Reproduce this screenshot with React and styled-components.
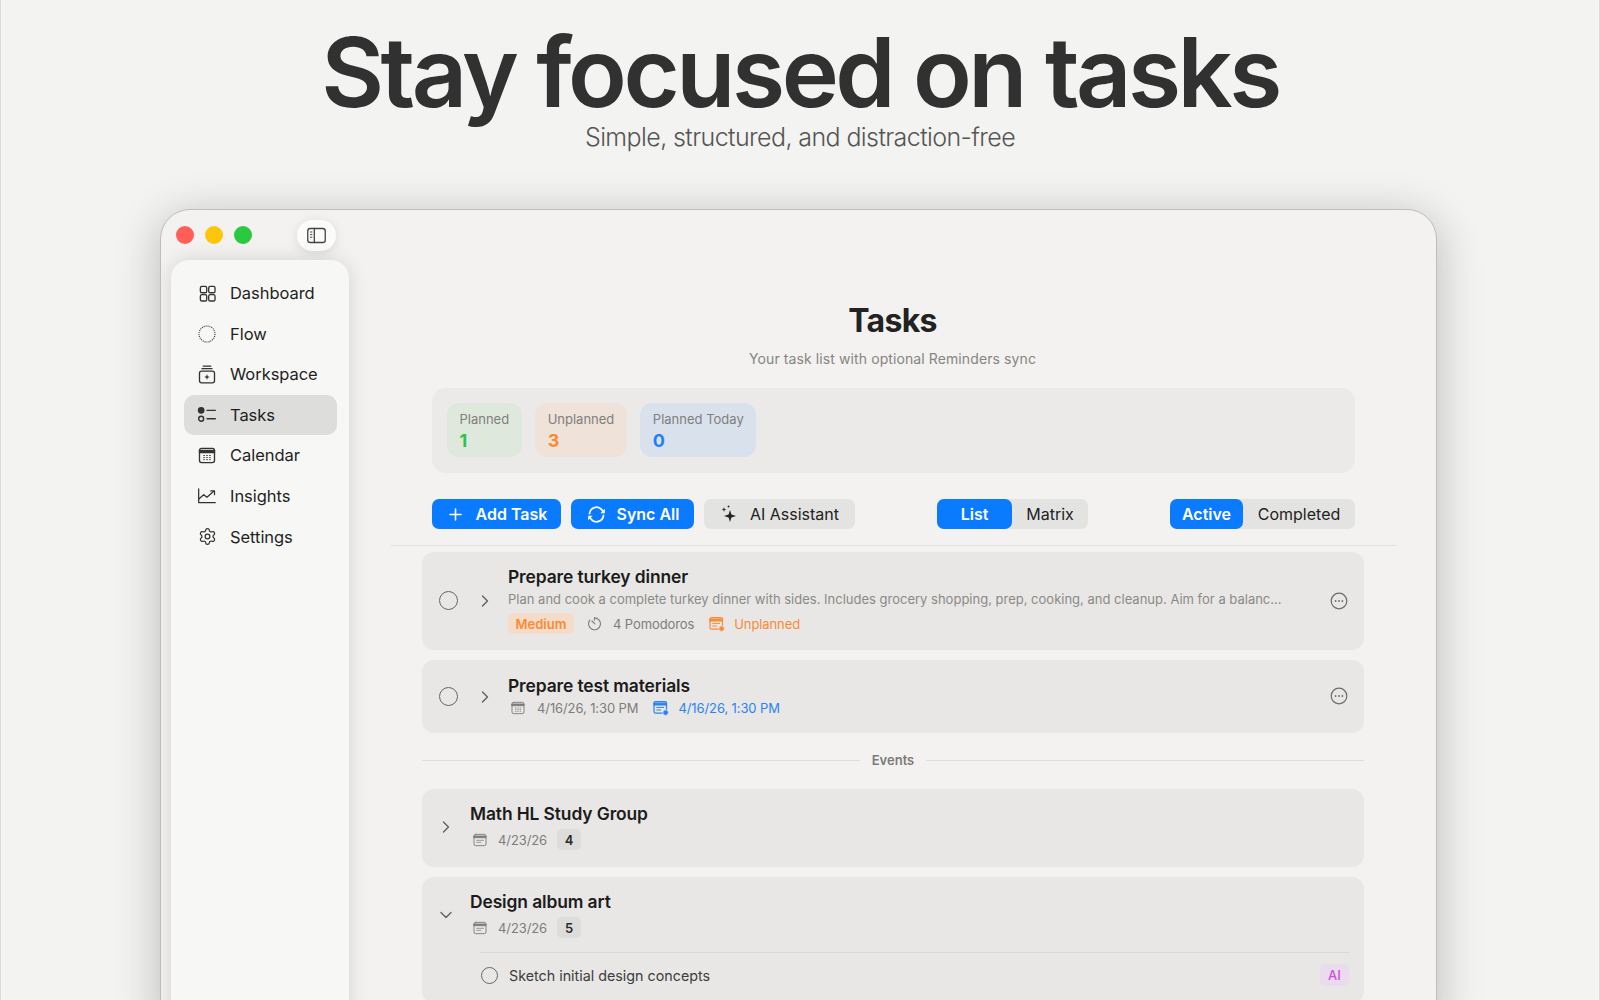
import styled, { createGlobalStyle } from 'styled-components'
import { Plus, Settings, ChevronRight, ChevronDown } from 'lucide-react'

const GlobalStyle = createGlobalStyle`
  html, body {
    margin: 0;
    padding: 0;
    background: #f3f3f1;
  }
  * {
    box-sizing: border-box;
  }
`

const Page = styled.div`
  height: 1000px;
  overflow: hidden;
  background: #f3f3f1;
  border-left: 1px solid #dcdcda;
  border-right: 1px solid #dcdcda;
  font-family: Inter, "Liberation Sans", sans-serif;
  color: #1d1d1d;
`

const Hero = styled.header`
  height: 209px;
  padding-top: 25px;
  text-align: center;
`

const HeroTitle = styled.h1`
  margin: 0;
  font-size: 96.7px;
  line-height: 94px;
  font-weight: 600;
  letter-spacing: -3.5px;
  color: #313131;
`

const HeroSub = styled.p`
  margin: 3px 0 0;
  font-size: 25px;
  line-height: 30px;
  font-weight: 300;
  letter-spacing: -0.6px;
  color: #555;
`

const Window = styled.div`
  display: flex;
  width: 1277px;
  height: 830px;
  margin-left: 159px;
  overflow: hidden;
  background: #f3f2f0;
  border: 1px solid #bdbdbb;
  border-radius: 30px;
  box-shadow: 0 8px 45px rgba(0, 0, 0, 0.24);
`

const LeftColumn = styled.aside`
  flex: 0 0 188px;
  display: flex;
  flex-direction: column;
`

const TitleBar = styled.div`
  height: 50px;
  display: flex;
  align-items: center;
  gap: 11px;
  padding-left: 15px;
`

const Light = styled.span`
  width: 18px;
  height: 18px;
  border-radius: 50%;
  background: ${({ $color }) => $color};
`

const SidebarToggle = styled.button`
  width: 39px;
  height: 31px;
  margin-left: 34px;
  display: flex;
  align-items: center;
  justify-content: center;
  padding: 0;
  border: 0;
  border-radius: 16px;
  color: #444;
  background: #fbfbfa;
  box-shadow: 0 2px 12px rgba(0, 0, 0, 0.1);
`

const Sidebar = styled.nav`
  flex: 1;
  margin-left: 10px;
  padding: 13px 12px 0 13px;
  display: flex;
  flex-direction: column;
  gap: 0.6px;
  background: #f7f7f5;
  border-radius: 18px 18px 0 0;
  box-shadow: 0 0 20px rgba(0, 0, 0, 0.13);
`

const NavItem = styled.div`
  height: 40px;
  display: flex;
  align-items: center;
  gap: 13px;
  padding-left: 13px;
  border-radius: 10px;
  font-size: 16.5px;
  letter-spacing: -0.05px;
  color: #1f1f1f;
  background: ${({ $active }) => ($active ? '#dddddb' : 'transparent')};
`

const NavIcon = styled.span`
  width: 20px;
  height: 20px;
  display: flex;
  align-items: center;
  justify-content: center;
  color: #333;
`

const Main = styled.main`
  flex: 1;
  min-width: 0;
  padding-top: 91px;
  display: flex;
  flex-direction: column;
`

const PageTitle = styled.h2`
  margin: 0;
  text-align: center;
  font-size: 32px;
  line-height: 40px;
  font-weight: 700;
  letter-spacing: -0.7px;
  color: #222;
`

const PageSub = styled.p`
  margin: 8px 0 0;
  text-align: center;
  font-size: 14px;
  line-height: 20px;
  color: #858583;
  letter-spacing: 0.1px;
`

const StatsPanel = styled.section`
  margin: 19px 81px 0 83px;
  padding: 15px;
  height: 85px;
  display: flex;
  gap: 13.5px;
  background: #ebeae8;
  border-radius: 14px;
`

const StatCard = styled.div`
  height: 54px;
  padding: 8px 12.5px 0;
  border-radius: 12px;
  background: ${({ $bg }) => $bg};
`

const StatLabel = styled.div`
  font-size: 13px;
  line-height: 16px;
  color: #7f7f7d;
  white-space: nowrap;
`

const StatValue = styled.div`
  margin-top: 3px;
  font-size: 18px;
  line-height: 22px;
  font-weight: 700;
  color: ${({ $color }) => $color};
`

const Toolbar = styled.div`
  margin: 26px 81px 0 83px;
  height: 30px;
  display: flex;
  justify-content: space-between;
`

const ButtonGroup = styled.div`
  display: flex;
  gap: 10px;
`

const ActionButton = styled.button`
  height: 30px;
  width: ${({ $width }) => $width}px;
  display: flex;
  align-items: center;
  justify-content: center;
  gap: ${({ $gap }) => $gap}px;
  padding: 0;
  border: 0;
  border-radius: 7px;
  font-family: inherit;
  font-size: 16px;
  font-weight: ${({ $primary }) => ($primary ? 600 : 400)};
  color: ${({ $primary }) => ($primary ? '#fff' : '#222')};
  background: ${({ $primary }) => ($primary ? '#0a7aff' : '#e3e3e1')};
`

const Segment = styled.div`
  display: flex;
  height: 30px;
  border-radius: 7px;
  background: #e3e3e1;
`

const SegmentItem = styled.div`
  width: ${({ $width }) => $width}px;
  display: flex;
  align-items: center;
  justify-content: center;
  border-radius: 7px;
  font-size: 16px;
  font-weight: ${({ $active }) => ($active ? 600 : 400)};
  color: ${({ $active }) => ($active ? '#fff' : '#222')};
  background: ${({ $active }) => ($active ? '#0a7aff' : 'transparent')};
`

const Rule = styled.div`
  height: 1px;
  margin: 16px 40px 0 42px;
  background: #e0e0de;
`

const List = styled.div`
  margin: 6px 72px 0 73px;
  display: flex;
  flex-direction: column;
  gap: 10px;
`

const EventList = styled(List)`
  margin-top: 4px;
`

const TaskCard = styled.article`
  min-height: ${({ $height }) => $height}px;
  display: flex;
  align-items: center;
  padding: 0 16px 0 17px;
  background: #e8e7e5;
  border-radius: 12px;
`

const Check = styled.span`
  flex: none;
  width: ${({ $size }) => $size}px;
  height: ${({ $size }) => $size}px;
  margin-top: ${({ $lift }) => ($lift ? -1 : 0)}px;
  border: 1.6px solid #666664;
  border-radius: 50%;
`

const ChevronSlot = styled.span`
  flex: none;
  width: ${({ $width }) => $width}px;
  display: flex;
  justify-content: center;
  color: #5f5f5d;
`

const TaskChevron = styled(ChevronSlot)`
  padding-left: 3px;
`

const TaskBody = styled.div`
  flex: 1;
  min-width: 0;
  margin-top: ${({ $offset }) => $offset}px;
  display: flex;
  flex-direction: column;
`

const TaskTitle = styled.div`
  font-size: 17.4px;
  line-height: 22px;
  font-weight: 600;
  letter-spacing: -0.1px;
  color: #1b1b1b;
`

const TaskDesc = styled.div`
  margin: 1px 0 4px;
  font-size: 13px;
  line-height: 20px;
  color: #8a8a88;
  white-space: nowrap;
`

const MetaRow = styled.div`
  height: 21px;
  display: flex;
  align-items: center;
`

const MetaIcon = styled.span`
  display: flex;
  align-items: center;
  justify-content: center;
  margin: ${({ $margin }) => $margin || '0'};
  color: ${({ $color }) => $color || '#7d7d7b'};
`

const MetaText = styled.span`
  font-size: 13px;
  letter-spacing: -0.1px;
  white-space: nowrap;
  color: ${({ $color }) => $color || '#7d7d7b'};
  margin-right: ${({ $right }) => $right || 0}px;
`

const PriorityBadge = styled.span`
  width: 66px;
  height: 21px;
  display: flex;
  align-items: center;
  justify-content: center;
  border-radius: 5px;
  font-size: 13px;
  font-weight: 600;
  color: #fb8a35;
  background: #f4dcc8;
`

const MoreButton = styled.span`
  flex: none;
  display: flex;
  margin-top: -1px;
  color: #6c6c6a;
`

const EventsDivider = styled.div`
  height: 46px;
  margin-bottom: -4px;
  display: flex;
  align-items: center;
  gap: 12px;
  font-size: 13px;
  font-weight: 600;
  color: #7b7b79;

  &::before,
  &::after {
    content: '';
    flex: 1;
    height: 1px;
    background: #dededc;
  }
`

const EventCard = styled.article`
  padding: 14px 15px 17px 0;
  background: #e8e7e5;
  border-radius: 12px;
`

const EventHead = styled.div`
  display: flex;
  align-items: center;
`

const EventBody = styled.div`
  display: flex;
  flex-direction: column;
  gap: 4px;
`

const CountBadge = styled.span`
  width: 24px;
  height: 21px;
  margin-left: 10px;
  display: flex;
  align-items: center;
  justify-content: center;
  border-radius: 5px;
  font-size: 13px;
  font-weight: 600;
  color: #2a2a2a;
  background: #dcdcda;
`

const SubRule = styled.div`
  height: 1px;
  margin: 14px 0 11px 58px;
  background: #d9d9d7;
`

const SubTask = styled.div`
  height: 22px;
  margin-left: 59px;
  display: flex;
  align-items: center;
  gap: 11px;
  font-size: 14.3px;
  color: #3d3d3d;
`

const SubTaskLabel = styled.span`
  flex: 1;
`

const AiBadge = styled.span`
  width: 29px;
  height: 22px;
  display: flex;
  align-items: center;
  justify-content: center;
  border-radius: 5px;
  font-size: 13px;
  font-weight: 500;
  color: #cf4fe0;
  background: #eadcec;
`

const Svg = ({ size = 18, children, fill = 'none', stroke = 'currentColor', sw = 1.4 }) => (
  <svg
    width={size}
    height={size}
    viewBox="0 0 24 24"
    fill={fill}
    stroke={stroke}
    strokeWidth={sw}
    strokeLinecap="round"
    strokeLinejoin="round"
  >
    {children}
  </svg>
)

const PanelIcon = () => (
  <Svg size={21} sw={1.5}>
    <rect x="2" y="4" width="20" height="16" rx="3" />
    <path d="M9.5 4v16" />
    <path d="M5 8h1.8M5 11h1.8M5 14h1.8" strokeWidth="1.1" />
  </Svg>
)

const GridIcon = () => (
  <Svg size={19} sw={1.7}>
    <rect x="3" y="3" width="8" height="8" rx="2" />
    <rect x="13.5" y="3" width="8" height="8" rx="2" />
    <rect x="3" y="13.5" width="8" height="8" rx="2" />
    <rect x="13.5" y="13.5" width="8" height="8" rx="2" />
  </Svg>
)

const DottedIcon = () => (
  <svg width="20" height="20" viewBox="0 0 20 20" fill="none" stroke="#333" strokeWidth="1.1" strokeDasharray="1 1">
    <circle cx="10" cy="10" r="8" />
  </svg>
)

const TrayIcon = () => (
  <Svg size={21} sw={1.6}>
    <path d="M7.5 2h9M6 5h12" />
    <rect x="3" y="8" width="18" height="14" rx="2.5" />
    <path d="M12 11.5l.9 2.6 2.6.9-2.6.9-.9 2.6-.9-2.6-2.6-.9 2.6-.9z" fill="currentColor" stroke="none" />
  </Svg>
)

const ListIcon = () => (
  <Svg size={21} sw={1.7}>
    <circle cx="5" cy="7" r="3.2" fill="currentColor" />
    <circle cx="5" cy="17" r="3" />
    <path d="M12 7h10M12 17h10" />
  </Svg>
)

const CalendarIcon = ({ size = 20, sw = 1.5, dots = true }) => (
  <Svg size={size} sw={sw}>
    <rect x="3" y="3.5" width="18" height="17" rx="2.5" />
    <path d="M3 6h18v2.5H3z" fill="currentColor" />
    {dots ? (
      <path d="M8 12h1M11.5 12h1M15 12h1M8 14.5h1M11.5 14.5h1M15 14.5h1M8 17h1M11.5 17h1M15 17h1" strokeWidth="1.1" />
    ) : (
      <path d="M7 12.5h10M7 15.5h6" strokeWidth="1.1" />
    )}
  </Svg>
)

const ChartIcon = () => (
  <Svg size={21} sw={1.5}>
    <path d="M2 4v16.5h20" />
    <path d="M2.5 16l5.5-5 4 3 8-7" />
    <path d="M16.5 6.5H21V11" />
  </Svg>
)

const SyncIcon = () => (
  <Svg size={21} sw={2}>
    <path d="M4 11a8 8 0 0 1 14-4.5L20 9" />
    <path d="M20 13a8 8 0 0 1-14 4.5L4 15" />
    <path d="M21.5 5.5v5h-5z" fill="currentColor" stroke="none" />
    <path d="M2.5 18.5v-5h5z" fill="currentColor" stroke="none" />
  </Svg>
)

const SparkleIcon = () => (
  <svg width="18" height="18" viewBox="0 0 18 18" fill="#222">
    <path d="M10 5l1.4 4.6L16 11l-4.6 1.4L10 17l-1.4-4.6L4 11l4.6-1.4z" />
    <path d="M4 2l.6 1.9 1.9.6-1.9.6L4 7l-.6-1.9-1.9-.6 1.9-.6z" />
    <path d="M8.5 0l.4 1.1 1.1.4-1.1.4-.4 1.1-.4-1.1L7 1.5l1.1-.4z" />
  </svg>
)

const TimerIcon = () => (
  <Svg size={15} sw={1.8}>
    <path d="M12 3a9.5 9.5 0 1 1-7.5 3.7" />
    <path d="M12 3v3.5" />
    <path d="M8 8l4.5 4.5" />
  </Svg>
)

const BadgeCalendarIcon = ({ color }) => (
  <svg width="16" height="16" viewBox="0 0 16 16" fill="none" stroke={color} strokeWidth="1.2">
    <rect x="1" y="1.6" width="12.5" height="11.5" rx="1.6" />
    <path d="M1 3.2h12.5v1.8H1z" fill={color} />
    <path d="M3.4 7.4h7.6M3.4 10h4.6" strokeWidth="1" />
    <circle cx="12.6" cy="12.6" r="2.8" fill={color} stroke="#e8e7e5" strokeWidth="0.8" />
  </svg>
)

const MoreIcon = () => (
  <svg width="18" height="18" viewBox="0 0 18 18" fill="none" stroke="currentColor" strokeWidth="1.2">
    <circle cx="9" cy="9" r="7.8" />
    <circle cx="5.6" cy="9" r="0.9" fill="currentColor" stroke="none" />
    <circle cx="9" cy="9" r="0.9" fill="currentColor" stroke="none" />
    <circle cx="12.4" cy="9" r="0.9" fill="currentColor" stroke="none" />
  </svg>
)

const navItems = [
  { label: 'Dashboard', icon: <GridIcon /> },
  { label: 'Flow', icon: <DottedIcon /> },
  { label: 'Workspace', icon: <TrayIcon /> },
  { label: 'Tasks', icon: <ListIcon />, active: true },
  { label: 'Calendar', icon: <CalendarIcon size={21} sw={1.6} /> },
  { label: 'Insights', icon: <ChartIcon /> },
  { label: 'Settings', icon: <Settings size={19} strokeWidth={1.6} /> },
]

const stats = [
  { label: 'Planned', value: 1, bg: '#dfe8dd', color: '#2fc24f' },
  { label: 'Unplanned', value: 3, bg: '#efe2d8', color: '#fb8a2e' },
  { label: 'Planned Today', value: 0, bg: '#d9e2ec', color: '#1e80f8' },
]

function App() {
  return (
    <Page>
      <GlobalStyle />
      <Hero>
        <HeroTitle>Stay focused on tasks</HeroTitle>
        <HeroSub>Simple, structured, and distraction-free</HeroSub>
      </Hero>
      <Window>
        <LeftColumn>
          <TitleBar>
            <Light $color="#ff5f57" />
            <Light $color="#fdc60a" />
            <Light $color="#2bc840" />
            <SidebarToggle>
              <PanelIcon />
            </SidebarToggle>
          </TitleBar>
          <Sidebar>
            {navItems.map((item) => (
              <NavItem key={item.label} $active={item.active}>
                <NavIcon>{item.icon}</NavIcon>
                {item.label}
              </NavItem>
            ))}
          </Sidebar>
        </LeftColumn>
        <Main>
          <PageTitle>Tasks</PageTitle>
          <PageSub>Your task list with optional Reminders sync</PageSub>
          <StatsPanel>
            {stats.map((stat) => (
              <StatCard key={stat.label} $bg={stat.bg}>
                <StatLabel>{stat.label}</StatLabel>
                <StatValue $color={stat.color}>{stat.value}</StatValue>
              </StatCard>
            ))}
          </StatsPanel>
          <Toolbar>
            <ButtonGroup>
              <ActionButton $primary $width={129} $gap={11}>
                <Plus size={19} strokeWidth={2} />
                Add Task
              </ActionButton>
              <ActionButton $primary $width={123} $gap={10}>
                <SyncIcon />
                Sync All
              </ActionButton>
              <ActionButton $width={151} $gap={12}>
                <SparkleIcon />
                AI Assistant
              </ActionButton>
            </ButtonGroup>
            <Segment>
              <SegmentItem $active $width={75}>List</SegmentItem>
              <SegmentItem $width={76}>Matrix</SegmentItem>
            </Segment>
            <Segment>
              <SegmentItem $active $width={73}>Active</SegmentItem>
              <SegmentItem $width={112}>Completed</SegmentItem>
            </Segment>
          </Toolbar>
          <Rule />
          <List>
            <TaskCard $height={98}>
              <Check $size={19} $lift />
              <TaskChevron $width={50}>
                <ChevronRight size={20} strokeWidth={1.6} />
              </TaskChevron>
              <TaskBody $offset={-2}>
                <TaskTitle>Prepare turkey dinner</TaskTitle>
                <TaskDesc>
                  Plan and cook a complete turkey dinner with sides. Includes grocery shopping, prep, cooking, and cleanup. Aim for a balanc...
                </TaskDesc>
                <MetaRow>
                  <PriorityBadge>Medium</PriorityBadge>
                  <MetaIcon $margin="0 11px 0 13px"><TimerIcon /></MetaIcon>
                  <MetaText $right={15}>4 Pomodoros</MetaText>
                  <MetaIcon $margin="0 9px 0 0" $color="#fb8a35">
                    <BadgeCalendarIcon color="#fb8a35" />
                  </MetaIcon>
                  <MetaText $color="#fb8a35">Unplanned</MetaText>
                </MetaRow>
              </TaskBody>
              <MoreButton><MoreIcon /></MoreButton>
            </TaskCard>
            <TaskCard $height={73}>
              <Check $size={19} $lift />
              <TaskChevron $width={50}>
                <ChevronRight size={20} strokeWidth={1.6} />
              </TaskChevron>
              <TaskBody $offset={0}>
                <TaskTitle>Prepare test materials</TaskTitle>
                <MetaRow>
                  <MetaIcon $margin="0 11px 0 2px"><CalendarIcon size={16} sw={1.4} /></MetaIcon>
                  <MetaText $right={15}>4/16/26, 1:30 PM</MetaText>
                  <MetaIcon $margin="0 9px 0 0"><BadgeCalendarIcon color="#2a83f6" /></MetaIcon>
                  <MetaText $color="#2a83f6">4/16/26, 1:30 PM</MetaText>
                </MetaRow>
              </TaskBody>
              <MoreButton><MoreIcon /></MoreButton>
            </TaskCard>
          </List>
          <EventList as="section">
            <EventsDivider>Events</EventsDivider>
            <EventCard>
              <EventHead>
                <ChevronSlot $width={48}>
                  <ChevronRight size={20} strokeWidth={1.6} />
                </ChevronSlot>
                <EventBody>
                  <TaskTitle>Math HL Study Group</TaskTitle>
                  <MetaRow>
                    <MetaIcon $margin="0 10px 0 2px"><CalendarIcon size={16} sw={1.4} dots={false} /></MetaIcon>
                    <MetaText>4/23/26</MetaText>
                    <CountBadge>4</CountBadge>
                  </MetaRow>
                </EventBody>
              </EventHead>
            </EventCard>
            <EventCard>
              <EventHead>
                <ChevronSlot $width={48}>
                  <ChevronDown size={20} strokeWidth={1.6} />
                </ChevronSlot>
                <EventBody>
                  <TaskTitle>Design album art</TaskTitle>
                  <MetaRow>
                    <MetaIcon $margin="0 10px 0 2px"><CalendarIcon size={16} sw={1.4} dots={false} /></MetaIcon>
                    <MetaText>4/23/26</MetaText>
                    <CountBadge>5</CountBadge>
                  </MetaRow>
                </EventBody>
              </EventHead>
              <SubRule />
              <SubTask>
                <Check $size={17} />
                <SubTaskLabel>Sketch initial design concepts</SubTaskLabel>
                <AiBadge>AI</AiBadge>
              </SubTask>
            </EventCard>
          </EventList>
        </Main>
      </Window>
    </Page>
  )
}

export default App
